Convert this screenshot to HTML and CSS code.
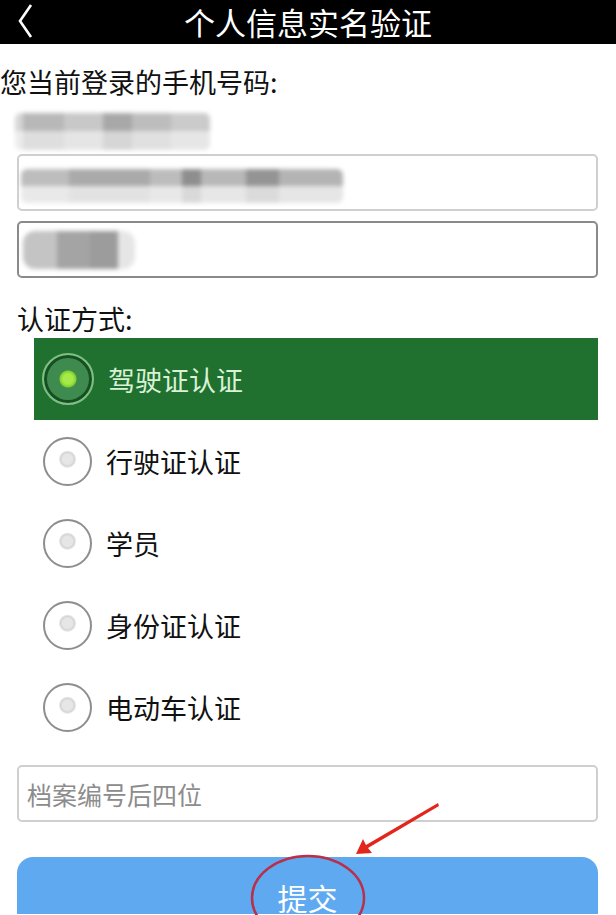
FILE: index.html
```html
<!DOCTYPE html>
<html lang="zh-CN">
<head>
  <meta charset="UTF-8" />
  <meta name="viewport" content="width=device-width, initial-scale=1.0"/>
  <title>个人信息实名验证</title>
  <link rel="stylesheet" href="styles.css">
</head>
<body>
  <!-- Top bar -->
  <header class="topbar">
    <svg class="back" width="20" height="36" viewBox="0 0 20 36">
      <polyline points="15,3 4,19 15,35" fill="none" stroke="#fff" stroke-width="2.6"/>
    </svg>
    <h1>个人信息实名验证</h1>
  </header>

  <main class="form">
    <p class="label phone-label">您当前登录的手机号码:</p>
    <div class="phone"><span class="blur blur-phone"></span></div>

    <div class="field"><span class="blur blur-long"></span></div>
    <div class="field field-dark"><span class="blur blur-short"></span></div>

    <p class="label method-label">认证方式:</p>

    <!-- Verification types -->
    <ul class="options">
      <li class="option selected"><span class="radio"></span>驾驶证认证</li>
      <li class="option"><span class="radio"></span>行驶证认证</li>
      <li class="option"><span class="radio"></span>学员</li>
      <li class="option"><span class="radio"></span>身份证认证</li>
      <li class="option"><span class="radio"></span>电动车认证</li>
    </ul>

    <input class="field file-no" type="text" placeholder="档案编号后四位">

    <button class="submit">提交</button>
  </main>

  <!-- Red annotation drawn over the screenshot -->
  <svg class="annotation" width="616" height="915" viewBox="0 0 616 915">
    <ellipse cx="308" cy="898" rx="56" ry="42" fill="none" stroke="#b8304a" stroke-width="2.5"/>
    <polygon points="438,803 439,806 368,848 372,853 356,854 363,839 366,845" fill="#e3261b"/>
  </svg>
</body>
</html>
```

FILE: styles.css
```css
/* Reset & base */
* {
  margin: 0;
  padding: 0;
  box-sizing: border-box;
}
html, body {
  width: 100%;
  height: 100%;
  overflow: hidden;
  background: #fff;
  font-family: "Noto Sans CJK SC", "Noto Sans", sans-serif;
  color: #111;
}

/* Top bar */
.topbar {
  height: 44px;
  background: #000;
  display: flex;
  align-items: center;
  justify-content: center;
  position: relative;
}
.topbar .back {
  position: absolute;
  left: 16px;
  top: 2px;
}
.topbar h1 {
  color: #fff;
  font-size: 31px;
  font-weight: normal;
  line-height: 40px;
}

/* Form */
.form {
  display: flex;
  flex-direction: column;
}
.label {
  font-size: 27px;
  line-height: 36px;
}
.phone-label {
  padding-top: 20px;
}
.phone {
  height: 41px;
  margin: 13px 0 0 15px;
}

/* Blurred (masked) values */
.blur {
  display: block;
  filter: blur(2px);
  border-radius: 6px;
}
.blur-phone {
  width: 195px;
  height: 37px;
  background:
    linear-gradient(#0000 0 50%, #fff8 50%),
    linear-gradient(90deg, #d6d6d6 0 4%, #b8b8b8 4% 25%, #c8c8c8 25% 45%, #a8a8a8 45% 60%, #bdbdbd 60% 80%, #cbcbcb 80%);
}
.blur-long {
  width: 322px;
  height: 34px;
  margin-top: 6px;
  background:
    linear-gradient(#0000 0 50%, #fffa 50%),
    linear-gradient(90deg, #bdbdbd 0 15%, #aaa 15% 40%, #bcbcbc 40% 50%, #8e8e8e 50% 56%, #b8b8b8 56% 70%, #949494 70% 80%, #b4b4b4 80%);
}
.blur-short {
  width: 112px;
  height: 38px;
  background: linear-gradient(90deg, #c4c4c4 0 30%, #a4a4a4 30% 60%, #9c9c9c 60% 85%, #e6e6e6 85%);
  border-radius: 12px;
}

.field {
  height: 57px;
  margin: 0 18px 0 17px;
  border: 2px solid #cfcfcf;
  border-radius: 5px;
  display: flex;
  align-items: center;
  padding-left: 2px;
}
.field + .field {
  margin-top: 10px;
}
.field-dark {
  border-color: #8a8a8a;
  padding-left: 4px;
}
.method-label {
  margin: 23px 0 0 17px;
}

/* Option list */
.options {
  list-style: none;
  margin: 1px 18px 0 34px;
}
.option {
  height: 82px;
  display: flex;
  align-items: center;
  gap: 14px;
  padding-left: 9px;
  font-size: 27px;
}
.option .radio {
  width: 49px;
  height: 49px;
  border-radius: 50%;
  border: 2.5px solid #8e8e8e;
  background: radial-gradient(circle at 50% 45%, #e6e6e6 0 5px, #d4d4d4 7px, #fff 9px);
  flex: none;
}
.option.selected {
  background: #207030;
  color: #d9f2d6;
  padding-left: 8px;
}
.option.selected .radio {
  width: 52px;
  height: 52px;
  border: 2px solid #7fbf84;
  box-shadow: inset 0 0 0 3px #164f22;
  background: radial-gradient(circle, #a6ea4a 0 5px, #7ccf2c 8px, #3f8a4e 9px);
}

/* Archive number input */
.file-no {
  margin-top: 17px;
  font: inherit;
  font-size: 25px;
  padding-left: 8px;
  color: #111;
  outline: none;
}
.file-no::placeholder {
  color: #8c8c8c;
}

/* Submit (runs off the bottom of the screen) */
.submit {
  height: 57px;
  margin: 35px 18px 0 17px;
  padding-top: 22px;
  border: none;
  border-radius: 16px 16px 0 0;
  background: #5ea9ef;
  color: #fff;
  font: inherit;
  font-size: 30px;
  line-height: 34px;
}

/* Annotation overlay */
.annotation {
  position: absolute;
  top: 0;
  left: 0;
  pointer-events: none;
}
```
